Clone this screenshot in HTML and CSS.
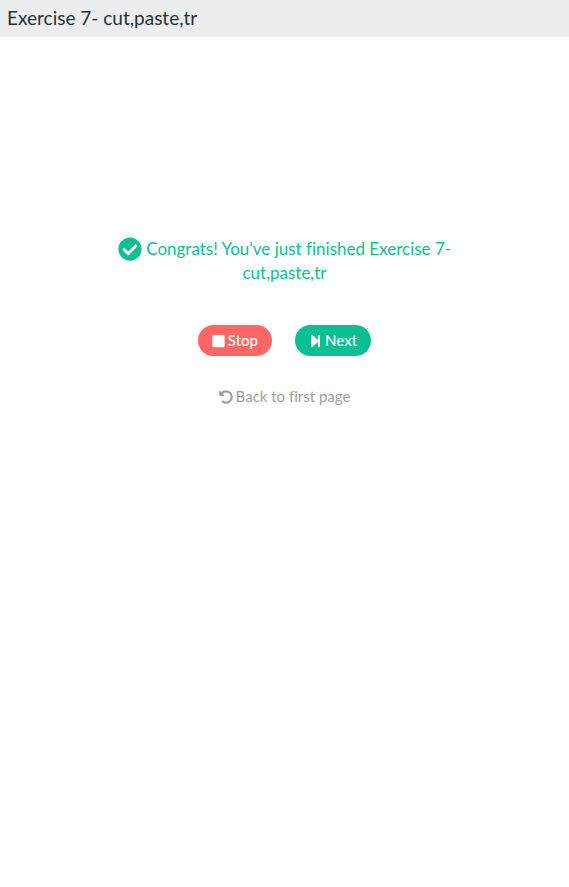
FILE: index.html
```
<!DOCTYPE html>
<html lang="en">
<head>
<meta charset="utf-8">
<meta name="viewport" content="width=device-width, initial-scale=1">
<title>Exercise 7- cut,paste,tr</title>
<link rel="stylesheet" href="styles.css">
</head>
<body>
<header class="topbar"><h1 class="title">Exercise 7- cut,paste,tr</h1></header>
<main class="result">
  <p class="message"><svg class="check" viewBox="0 0 512 512" aria-hidden="true"><path d="M504 256c0 136.967-111.033 248-248 248S8 392.967 8 256 119.033 8 256 8s248 111.033 248 248zM227.314 387.314l184-184c6.248-6.248 6.248-16.379 0-22.627l-22.627-22.627c-6.248-6.249-16.379-6.249-22.628 0L216 308.118l-70.059-70.059c-6.248-6.248-16.379-6.248-22.628 0l-22.627 22.627c-6.248 6.248-6.248 16.379 0 22.627l104 104c6.249 6.249 16.379 6.249 22.628.001z"/></svg> Congrats! You've just finished Exercise 7- cut,paste,tr</p>
  <div class="actions">
    <button class="pill stop" type="button"><svg class="icon" viewBox="0 0 448 512" aria-hidden="true"><path d="M400 32H48C21.500 32 0 53.500 0 80v352c0 26.500 21.500 48 48 48h352c26.500 0 48-21.500 48-48V80c0-26.500-21.500-48-48-48z"/></svg>Stop</button>
    <button class="pill next" type="button"><svg class="icon" viewBox="0 0 448 512" aria-hidden="true"><path d="M384 44v424c0 6.600-5.400 12-12 12h-48c-6.600 0-12-5.400-12-12V291.600l-195.500 181.900C95.900 490.700 64 476.600 64 448V64c0-28.600 31.900-42.700 52.500-25.500L312 219.300V44c0-6.600 5.400-12 12-12h48c6.600 0 12 5.400 12 12z"/></svg>Next</button>
  </div>
  <a class="back" href="#"><svg class="undo" viewBox="0 0 512 512" aria-hidden="true"><path d="M255.545 8c-66.269.119-126.438 26.233-170.860 68.685L48.971 40.971C33.851 25.851 8 36.559 8 57.941V192c0 13.255 10.745 24 24 24h134.059c21.382 0 32.090-25.851 16.971-40.971l-41.750-41.750c30.864-28.899 70.801-44.907 113.230-45.273 92.398-.798 170.283 73.977 169.484 169.442C423.236 348.009 349.816 424 256 424c-41.127 0-79.997-14.678-110.630-41.556-4.743-4.161-11.906-3.908-16.368.553L89.340 422.659c-4.872 4.872-4.631 12.815.482 17.433C133.798 479.813 192.074 504 256 504c136.966 0 247.999-111.033 248-247.998C504.001 119.193 392.354 7.755 255.545 8z"/></svg>Back to first page</a>
</main>
</body>
</html>
```
FILE: styles.css
```
* { box-sizing: border-box; }
body {
  margin: 0;
  background: #fff;
  color: #253238;
  font-family: Lato, "Liberation Sans", sans-serif;
  font-variant-ligatures: none;
}
.topbar {
  padding: 6px 7px 7px;
  background: #ecedef;
}
.title {
  margin: 0;
  font-size: 19px;
  line-height: 24px;
  font-weight: 400;
}
.result {
  display: flex;
  flex-direction: column;
  align-items: center;
  width: 60%;
  margin: 0 auto;
  padding-top: 200px;
  text-align: center;
}
.message {
  margin: 0;
  color: #0cbf92;
  font-size: 17px;
  line-height: 24px;
}
.check {
  width: 24px;
  height: 24px;
  vertical-align: top;
}
svg { fill: currentColor; }
.actions {
  display: flex;
  gap: 23px;
  margin-top: 40px;
}
.pill {
  display: flex;
  align-items: center;
  gap: 3px;
  padding: 5px 14px;
  border: 0;
  border-radius: 16px;
  color: #fff;
  font-family: inherit;
  font-size: 15px;
  line-height: 21px;
  font-weight: 500;
  font-variant-ligatures: none;
}
.stop { background: #ff6666; }
.next { background: #0cbf92; }
.icon { width: 13px; height: 14px; }
.back {
  display: flex;
  align-items: center;
  gap: 3px;
  margin-top: 30px;
  color: #a0a0a0;
  font-size: 15px;
  line-height: 21px;
  text-decoration: none;
}
.undo { width: 14px; height: 14px; }
```
